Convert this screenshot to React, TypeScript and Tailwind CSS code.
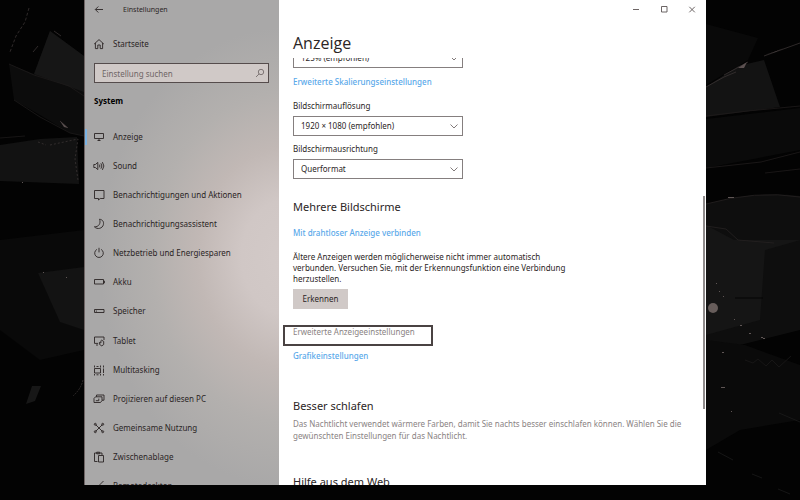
import type { ReactNode } from "react";

function Glyph({ children }: { children: ReactNode }) {
  return (
    <svg
      viewBox="0 0 12 12"
      className="size-3 shrink-0"
      fill="none"
      stroke="currentColor"
      strokeWidth="0.9"
      aria-hidden="true"
    >
      {children}
    </svg>
  );
}

const navItems: { label: string; icon: ReactNode; active?: boolean }[] = [
  {
    label: "Anzeige",
    active: true,
    icon: <path d="M1.5 2.5h9v5h-9zM4.5 9.5h3M6 7.5v2" />,
  },
  {
    label: "Sound",
    icon: (
      <path d="M.8 4.5h1.6L4.8 2.4v7.2L2.4 7.5H.8zM6.4 4.6q1 1.4 0 2.8M7.9 3.3q2 2.7 0 5.4M9.4 2.1q3 3.9 0 7.8" />
    ),
  },
  {
    label: "Benachrichtigungen und Aktionen",
    icon: <path d="M1.5 1.5h9.5v8H7.2L5.5 11V9.5h-4z" />,
  },
  {
    label: "Benachrichtigungsassistent",
    icon: <path d="M6.5 1.2C9.8 1.6 11 4 10.4 6.6 9.6 10.4 4.4 12 1.4 8.8 5.6 9.2 8.2 5.2 6.5 1.2z" />,
  },
  {
    label: "Netzbetrieb und Energiesparen",
    icon: <path d="M6 .8v4.6M3.9 2.4a4.3 4.3 0 1 0 4.2 0" />,
  },
  { label: "Akku", icon: <path d="M1.5 3.5h9v4.5h-9zM10.6 5h.8v2h-.8" /> },
  { label: "Speicher", icon: <path d="M1.5 4.5h9.5v3h-9.5zM2.8 6.1h1.2" /> },
  {
    label: "Tablet",
    icon: <path d="M5 8.4H1.5V2h9.5v3M3 10h2M8.6 5.2l2.1 1.2v3.1l-1.9 1.4-2.4-1.6V7.4l1.5.6V5.7z" />,
  },
  {
    label: "Multitasking",
    icon: <path d="M1.5 1.5v2M1.5 4.5h6v4.5h-6zM1.5 10v1.5M3.5 2.5h2M7.5 1.5v2M3.5 10.8h2M7.5 10v1.5M10.5 1.5v2M10.5 4.5v4.5M10.5 10v1.5" />,
  },
  {
    label: "Projizieren auf diesen PC",
    icon: <path d="M3.5 3.8V2H11v5.2H9M1 5.5l1.5-1.7H9v3.8L7.5 9.5H1zM2.8 7.7h3M5.8 5.6v2.1" />,
  },
  {
    label: "Gemeinsame Nutzung",
    icon: (
      <>
        <path d="M2.5 2.5l7 7M9.5 2.5l-7 7" />
        <circle cx="2.3" cy="2.3" r="1" />
        <circle cx="9.7" cy="2.3" r="1" />
        <circle cx="2.3" cy="9.7" r="1" />
        <circle cx="9.7" cy="9.7" r="1" />
      </>
    ),
  },
  {
    label: "Zwischenablage",
    icon: <path d="M4.5 10.5h-3V2H9v2M3.7 2.8V1.2h3v1.6zM5.5 4.5h5v6.5h-5z" />,
  },
  {
    label: "Remotedesktop",
    icon: <path d="M1.5 6l2.5 2.5L1.5 11M10.5 1L6.5 5l4 4" />,
  },
];

function Wallpaper() {
  return (
    <svg
      viewBox="0 0 800 500"
      preserveAspectRatio="none"
      className="absolute inset-0 size-full"
      aria-hidden="true"
    >
      <rect width="800" height="500" fill="#030303" />
      <path d="M50 31L84 56V136L70 133 40 115 14 100 9 64 34 74z" fill="#0c0c0c" />
      <path d="M50 31L84 56V92L34 74z" fill="#161616" />
      <path d="M0 145L40 139 77 137 79 184 0 181z" fill="#121212" />
      <path d="M0 240L84 230V350L40 360 0 330z" fill="#090909" />
      <path d="M38 273L84 267V330L60 322z" fill="#131313" />
      <path d="M706 87L738 66 764 60 780 107 706 117z" fill="#131313" />
      <path d="M706 24L758 38 748 60 706 85z" fill="#090909" />
      <path d="M706 119L800 108V150L706 168z" fill="#0a0a0a" />
      <path d="M706 204Q760 190 800 196V330L740 345 706 360z" fill="#0e0e0e" />
      <path d="M706 225L734 240 800 240 765 250 760 320 706 335z" fill="#151515" />
      <path d="M706 340L745 345 800 365V420L740 430 706 450z" fill="#0a0a0a" />
      <path d="M32 386l9 0-6 15-9 3z" fill="#171717" />
      <g fill="none" stroke="#3a3434" strokeWidth="0.8">
        <path d="M29 8l-4 14-9 14-6 16" strokeDasharray="3 2" />
        <path d="M9 64l25 11 35 11 15 10M14 100l26 17 30 16 14 3" stroke="#1d1b1b" />
        <path d="M0 138l25-2" stroke="#1d1b1b" />
        <path d="M38 142l8 3M50 145l28-6-3 20 3 21" strokeDasharray="2 2" />
        <path d="M706 87l18-10 12-5M724 75l24-13" />
        <path d="M764 56l36-13" />
        <path d="M706 116l42-5 52-5M706 168l55-6 39-10M765 173l35-4" stroke="#1f1c1c" />
        <path d="M706 204q50-14 94-7M706 226l20 3 12 11 36 3" stroke="#262222" />
        <path d="M83 380q-2 9-10 16" strokeDasharray="2 1" />
        <path d="M54 31l7 5M33 52l5-6M60 121l8 7" />
        <path d="M718 452l15 8M752 474l10 4M779 413l21 9M778 489l12 5" stroke="#1b1a1a" />
        <path d="M735 298h28" stroke="#000" />
        <path d="M745 360l8 3 5-4 8 7 6-6 7 7 12-11" stroke="#1b1919" />
      </g>
      <path d="M738 68l9-6-3 6zM60 121l8 7-4-1z" fill="#5c5151" />
      <path d="M764 55l10-3 10-4-9 4z" fill="#5c5151" />
      <circle cx="713" cy="308" r="5" fill="#675d5b" />
      <g fill="#5f5655">
        <rect x="716" y="283" width="1" height="1" />
        <rect x="719" y="291" width="1" height="1" />
        <rect x="723" y="296" width="1" height="1" />
        <rect x="734" y="319" width="1" height="1" />
        <rect x="740" y="325" width="2" height="1" />
        <rect x="749" y="333" width="2" height="1" />
        <rect x="761" y="337" width="2" height="1" />
        <rect x="763" y="338" width="2" height="1" />
        <rect x="722" y="352" width="2" height="1" />
        <rect x="721" y="387" width="4" height="1" />
        <rect x="731" y="411" width="1" height="1" />
        <rect x="728" y="197" width="6" height="1" />
        <rect x="66" y="277" width="1" height="1" />
        <rect x="43" y="272" width="1" height="1" />
        <rect x="22" y="182" width="1" height="1" />
      </g>
    </svg>
  );
}

function Sidebar() {
  return (
    <aside className="flex w-[195px] shrink-0 flex-col overflow-hidden border-l border-[#6e6464] bg-[radial-gradient(ellipse_190px_230px_at_105%_53%,#d3cac8_0%,#d0c7c5_25%,#c1b8b5_48%,#b3b0ae_72%,#a9a8a8_100%)] text-[#2b2525]">
      <header className="flex h-5 shrink-0 items-center gap-[18px] pl-2 text-[7px]">
        <button type="button" aria-label="Zurück">
          <Glyph>
            <path d="M10 5.5H2.5M5.3 2.5L2.3 5.5l3 3" />
          </Glyph>
        </button>
        <span>Einstellungen</span>
      </header>
      <a href="#start" className="mt-[14px] flex h-5 shrink-0 items-center gap-2 pl-2 text-[8px]">
        <Glyph>
          <path d="M1.2 6L6 1.6 10.8 6M2.4 5v5.6h2.4V7h2.4v3.6h2.4V5" />
        </Glyph>
        Startseite
      </a>
      <div className="relative mt-[9px] mr-[10px] ml-[9px] h-5 shrink-0">
        <input
          type="search"
          aria-label="Einstellung suchen"
          placeholder="Einstellung suchen"
          className="block size-full appearance-none rounded-none border border-[#554c4c] bg-[#d0c9c7] pl-[7px] text-[8px] text-[#2b2525] outline-none placeholder:text-[#6f6666]"
        />
        <svg
          viewBox="0 0 10 10"
          className="absolute top-[5px] right-1 size-[10px] text-[#756c6c]"
          fill="none"
          stroke="currentColor"
          strokeWidth="0.9"
          aria-hidden="true"
        >
          <circle cx="6" cy="4" r="2.7" />
          <path d="M4.1 5.9L1 9" />
        </svg>
      </div>
      <h2 className="mt-[10px] shrink-0 pl-[9px] text-[8px] leading-4 font-bold text-black">System</h2>
      <nav className="mt-[13px] grid h-[379px] shrink-0 auto-rows-fr" aria-label="System">
        {navItems.map((item) => (
          <a
            key={item.label}
            href={"#" + item.label}
            aria-current={item.active ? "page" : undefined}
            className="relative flex items-center gap-2 pl-2 text-[8px] whitespace-nowrap"
          >
            {item.active && <span className="absolute left-0 h-4 w-[2px] bg-[#7bb4e4]" />}
            <Glyph>{item.icon}</Glyph>
            {item.label}
          </a>
        ))}
      </nav>
    </aside>
  );
}

function Dropdown({ id, value }: { id: string; value: string }) {
  return (
    <div className="relative h-5 w-[170px]">
      <select
        id={id}
        aria-label={value}
        className="block size-full appearance-none rounded-none border border-[#857f7f] bg-white pl-[7px] text-[8px] text-[#2b2525] outline-none"
      >
        <option>{value}</option>
      </select>
      <svg
        viewBox="0 0 8 5"
        className="pointer-events-none absolute top-2 right-[5px] h-[5px] w-2"
        fill="none"
        stroke="#746c6c"
        strokeWidth="0.9"
        aria-hidden="true"
      >
        <path d="M.5.5L4 4 7.5.5" />
      </svg>
    </div>
  );
}

const linkClass = "block w-fit text-[8px] leading-3 font-medium text-[#5aa9ea]";
const headingClass = "text-[11px] leading-4";

function Content() {
  return (
    <main className="relative flex min-w-0 flex-1 flex-col bg-white text-[#2b2525]">
      <div className="flex h-5 shrink-0 items-center justify-end gap-4 pr-2 text-[#5c5555]">
        <button type="button" aria-label="Minimieren">
          <Glyph>
            <path d="M3 5.5h6" />
          </Glyph>
        </button>
        <button type="button" aria-label="Maximieren">
          <Glyph>
            <path d="M3.5 2.5h5.5v5.5h-5.5z" />
          </Glyph>
        </button>
        <button type="button" aria-label="Schließen">
          <Glyph>
            <path d="M3.3 2.8l5.5 5.5M8.8 2.8L3.3 8.3" />
          </Glyph>
        </button>
      </div>
      <h1 className="mt-3 h-[26px] shrink-0 pl-[14px] font-['Open_Sans','Noto_Sans',sans-serif] text-[16px] leading-[22px]">
        Anzeige
      </h1>
      <div className="min-h-0 flex-1 overflow-hidden pr-5 pl-[14px]">
        <div className="-mt-[10px]">
          <Dropdown id="scale" value="125% (empfohlen)" />
        </div>
        <a href="#skalierung" className={linkClass + " mt-2"}>
          Erweiterte Skalierungseinstellungen
        </a>
        <label htmlFor="resolution" className="mt-3 block text-[8px] leading-3">
          Bildschirmauflösung
        </label>
        <div className="mt-1">
          <Dropdown id="resolution" value="1920 × 1080 (empfohlen)" />
        </div>
        <label htmlFor="orientation" className="mt-[7px] block text-[8px] leading-3">
          Bildschirmausrichtung
        </label>
        <div className="mt-1">
          <Dropdown id="orientation" value="Querformat" />
        </div>
        <h2 className={headingClass + " mt-5"}>Mehrere Bildschirme</h2>
        <a href="#drahtlos" className={linkClass + " mt-3"}>
          Mit drahtloser Anzeige verbinden
        </a>
        <p className="mt-3 max-w-[282px] text-[8px] leading-[11px]">
          Ältere Anzeigen werden möglicherweise nicht immer automatisch verbunden. Versuchen Sie, mit der
          Erkennungsfunktion eine Verbindung herzustellen.
        </p>
        <button type="button" className="mt-[5px] block h-5 w-[55px] bg-[#d0c9c7] text-[8px]">
          Erkennen
        </button>
        <a
          href="#anzeige"
          className="mt-4 -ml-[10px] block h-[21px] w-[150px] border-2 border-[#4a4343] pl-2 text-[8px] leading-[9px] text-[#8a8383]"
        >
          Erweiterte Anzeigeeinstellungen
        </a>
        <a href="#grafik" className={linkClass + " mt-1"}>
          Grafikeinstellungen
        </a>
        <h2 className={headingClass + " mt-9"}>Besser schlafen</h2>
        <p className="mt-1 text-[8px] leading-[12px] text-[#8a8383]">
          Das Nachtlicht verwendet wärmere Farben, damit Sie nachts besser einschlafen können. Wählen Sie die
          gewünschten Einstellungen für das Nachtlicht.
        </p>
        <h2 className={headingClass + " mt-8"}>Hilfe aus dem Web</h2>
      </div>
      <div className="absolute top-[196px] right-px h-[213px] w-[2px] bg-[#8f8b8b]" />
    </main>
  );
}

export default function App() {
  return (
    <div className="relative h-screen overflow-hidden bg-black font-['Noto_Sans','Open_Sans',sans-serif]">
      <Wallpaper />
      <div className="relative flex h-full pr-[94px] pb-[15px] pl-[84px]">
        <Sidebar />
        <Content />
      </div>
    </div>
  );
}
